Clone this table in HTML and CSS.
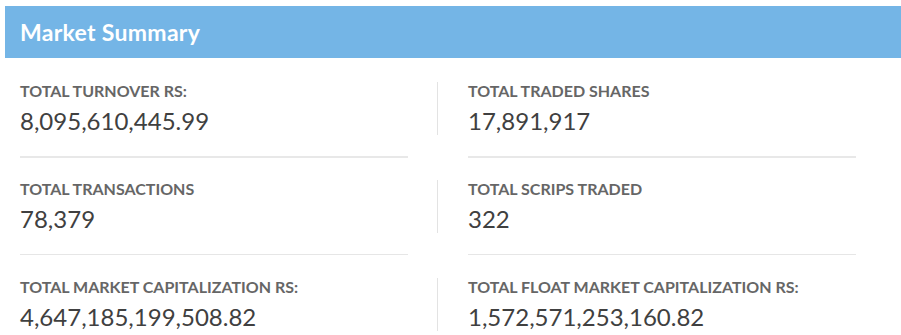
FILE: index.html
```html
<!DOCTYPE html>
<html lang="en">
<head>
<meta charset="utf-8">
<title>Market Summary</title>
<link rel="stylesheet" href="styles.css">
</head>
<body>
<section class="panel">
  <h2 class="panel-title">Market Summary</h2>
  <div class="stats">
    <div class="cell">
      <div class="stat"><div class="label">TOTAL TURNOVER RS:</div><div class="value">8,095,610,445.99</div></div>
      <div class="rule"></div>
    </div>
    <div class="cell cell-right">
      <div class="stat"><div class="label">TOTAL TRADED SHARES</div><div class="value">17,891,917</div></div>
      <div class="rule"></div>
    </div>
    <div class="cell">
      <div class="stat"><div class="label">TOTAL TRANSACTIONS</div><div class="value">78,379</div></div>
      <div class="rule rule-thin"></div>
    </div>
    <div class="cell cell-right">
      <div class="stat"><div class="label">TOTAL SCRIPS TRADED</div><div class="value">322</div></div>
      <div class="rule rule-thin"></div>
    </div>
    <div class="cell">
      <div class="stat"><div class="label">TOTAL MARKET CAPITALIZATION RS:</div><div class="value">4,647,185,199,508.82</div></div>
    </div>
    <div class="cell cell-right">
      <div class="stat"><div class="label">TOTAL FLOAT MARKET CAPITALIZATION RS:</div><div class="value">1,572,571,253,160.82</div></div>
    </div>
  </div>
</section>
</body>
</html>
```
FILE: styles.css
```css
html, body {
  margin: 0;
  padding: 0;
  background: #ffffff;
}
body {
  font-family: "Source Sans Pro", Lato, "Liberation Sans", sans-serif;
  overflow: hidden;
}
.panel {
  padding-top: 6px;
  padding-left: 5px;
}
.panel-title {
  margin: 0;
  height: 52px;
  display: flex;
  align-items: center;
  padding-left: 15px;
  background: #74b5e6;
  color: #ffffff;
  font-size: 23px;
  letter-spacing: 0.3px;
  font-weight: 700;
}
.stats {
  display: grid;
  grid-template-columns: 388px 419px;
  column-gap: 29px;
  padding: 24px 0 0 15px;
}
.stat {
  height: 53px;
  display: flex;
  flex-direction: column;
}
.cell-right .stat {
  border-left: 1px solid #e3e3e3;
  padding-left: 30px;
}
.label {
  font-size: 16px;
  line-height: 18px;
  font-weight: 700;
  color: #666666;
}
.value {
  font-size: 24px;
  line-height: 30px;
  margin-top: 6px;
  color: #404040;
}
.rule {
  height: 2px;
  background: #e8e8e8;
  margin: 21px 0 22px;
}
.rule-thin {
  height: 1px;
  margin: 21px 0 23px;
  background: #e6e6e6;
}
.cell-right .rule {
  margin-left: 31px;
}
```
